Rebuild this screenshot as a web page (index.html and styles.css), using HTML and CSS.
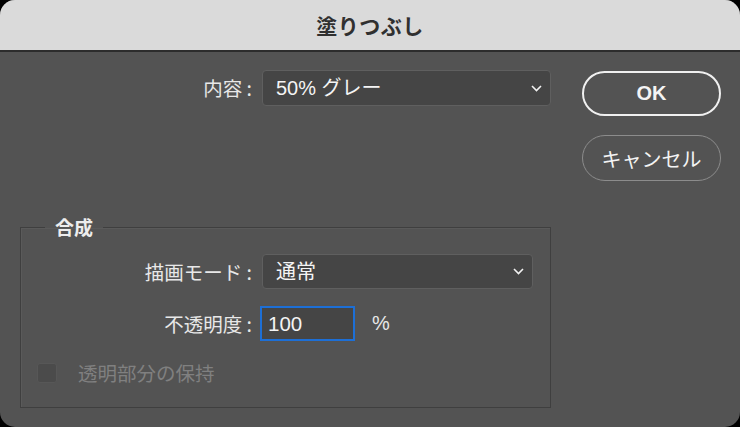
FILE: index.html
```html
<!DOCTYPE html>
<html lang="ja">
<head>
<meta charset="utf-8">
<link rel="stylesheet" href="styles.css">
</head>
<body>
<div class="window">
  <div class="titlebar">塗りつぶし</div>
  <div class="content">
    <div class="main">
      <div class="row top-row">
        <label class="lbl">内容 :</label>
        <div class="select select-wide"><span>50% グレー</span>
          <svg class="chev" width="11" height="7" viewBox="0 0 11 7"><path d="M1 1 L5.5 5.5 L10 1" fill="none" stroke="#f2f2f2" stroke-width="1.6"/></svg>
        </div>
      </div>
      <fieldset class="group">
        <legend>合成</legend>
        <div class="grid">
          <label class="lbl">描画モード :</label>
          <div class="select select-mode"><span>通常</span>
            <svg class="chev" width="11" height="7" viewBox="0 0 11 7"><path d="M1 1 L5.5 5.5 L10 1" fill="none" stroke="#f2f2f2" stroke-width="1.6"/></svg>
          </div>
          <label class="lbl">不透明度 :</label>
          <div class="opacity"><div class="input">100</div><span class="pct">%</span></div>
        </div>
        <div class="check-row">
          <span class="checkbox"></span>
          <span class="check-label">透明部分の保持</span>
        </div>
      </fieldset>
    </div>
    <div class="buttons">
      <div class="btn btn-ok">OK</div>
      <div class="btn btn-cancel">キャンセル</div>
    </div>
  </div>
</div>
</body>
</html>
```

FILE: styles.css
```css
html, body {
  margin: 0;
  padding: 0;
  background: #000;
}
body {
  width: 740px;
  height: 427px;
  overflow: hidden;
  font-family: "Liberation Sans", "Noto Sans CJK JP", sans-serif;
}
.window {
  width: 740px;
  height: 427px;
  border-radius: 15px;
  overflow: hidden;
  background: #535353;
  display: flex;
  flex-direction: column;
}
.titlebar {
  height: 50px;
  background: #dadada;
  border-bottom: 2px solid #2c2c2c;
  display: flex;
  align-items: center;
  justify-content: center;
  font-size: 21px;
  font-weight: bold;
  color: #303030;
  font-family: "Noto Sans CJK JP", sans-serif;
  letter-spacing: 0.5px;
}
.content {
  display: flex;
  padding: 18px 19px 0 20px;
  gap: 31px;
}
.main {
  width: 531px;
  display: flex;
  flex-direction: column;
}
.row {
  display: flex;
  align-items: center;
}
.lbl {
  color: #e8e8e8;
  font-size: 19.5px;
  line-height: 26px;
  text-align: right;
  font-family: "Noto Sans CJK JP", sans-serif;
  white-space: nowrap;
}
.top-row .lbl {
  width: 232px;
  margin-right: 10px;
}
.select {
  box-sizing: border-box;
  height: 36px;
  background: #454545;
  border: 1px solid #5f5f5f;
  border-radius: 4px;
  display: flex;
  align-items: center;
  justify-content: space-between;
  padding: 0 8px 0 13px;
  color: #f4f4f4;
  font-size: 20px;
  line-height: 24px;
}
.select span {
  font-family: "Liberation Sans", "Noto Sans CJK JP", sans-serif;
}
.select-wide {
  width: 289px;
}
.chev {
  display: block;
}
.group {
  margin: 110px 0 0 0;
  padding: 16px 0 24px 0;
  border: 1px solid #3f3f3f;
  box-shadow: inset 1px 1px 0 #5a5a5a;
  min-width: 0;
}
.group legend {
  margin-left: 24px;
  padding: 0 10px;
  font-size: 19px;
  line-height: 22px;
  font-weight: bold;
  color: #ededed;
  font-family: "Noto Sans CJK JP", sans-serif;
}
.grid {
  display: grid;
  grid-template-columns: 231px auto;
  column-gap: 10px;
  row-gap: 17px;
  align-items: center;
}
.select-mode {
  width: 271px;
  height: 35px;
}
.opacity {
  display: flex;
  align-items: center;
}
.input {
  box-sizing: border-box;
  width: 95px;
  height: 35px;
  margin-left: -2px;
  border: 2px solid #1d6fd6;
  background: #454545;
  color: #f4f4f4;
  font-size: 20.5px;
  display: flex;
  align-items: center;
  padding-left: 6px;
}
.pct {
  margin-left: 17px;
  color: #e8e8e8;
  font-size: 20px;
}
.check-row {
  display: flex;
  align-items: center;
  margin-top: 22px;
  padding-left: 16px;
  height: 20px;
}
.checkbox {
  box-sizing: border-box;
  width: 20px;
  height: 20px;
  border-radius: 3px;
  background: #4b4b4b;
  border: 1px solid #575757;
}
.check-label {
  margin-left: 21px;
  color: #808080;
  font-size: 19.5px;
  line-height: 20px;
  font-family: "Noto Sans CJK JP", sans-serif;
}
.buttons {
  width: 139px;
  display: flex;
  flex-direction: column;
  gap: 19px;
}
.btn {
  box-sizing: border-box;
  height: 45px;
  border-radius: 23px;
  display: flex;
  align-items: center;
  justify-content: center;
  color: #f4f4f4;
  font-size: 20px;
}
.btn-ok {
  margin-top: 1px;
  border: 2px solid #f0f0f0;
  font-weight: bold;
  font-size: 20px;
}
.btn-cancel {
  height: 46px;
  border: 1.5px solid #8c8c8c;
  font-family: "Noto Sans CJK JP", sans-serif;
  font-size: 20px;
}
```
